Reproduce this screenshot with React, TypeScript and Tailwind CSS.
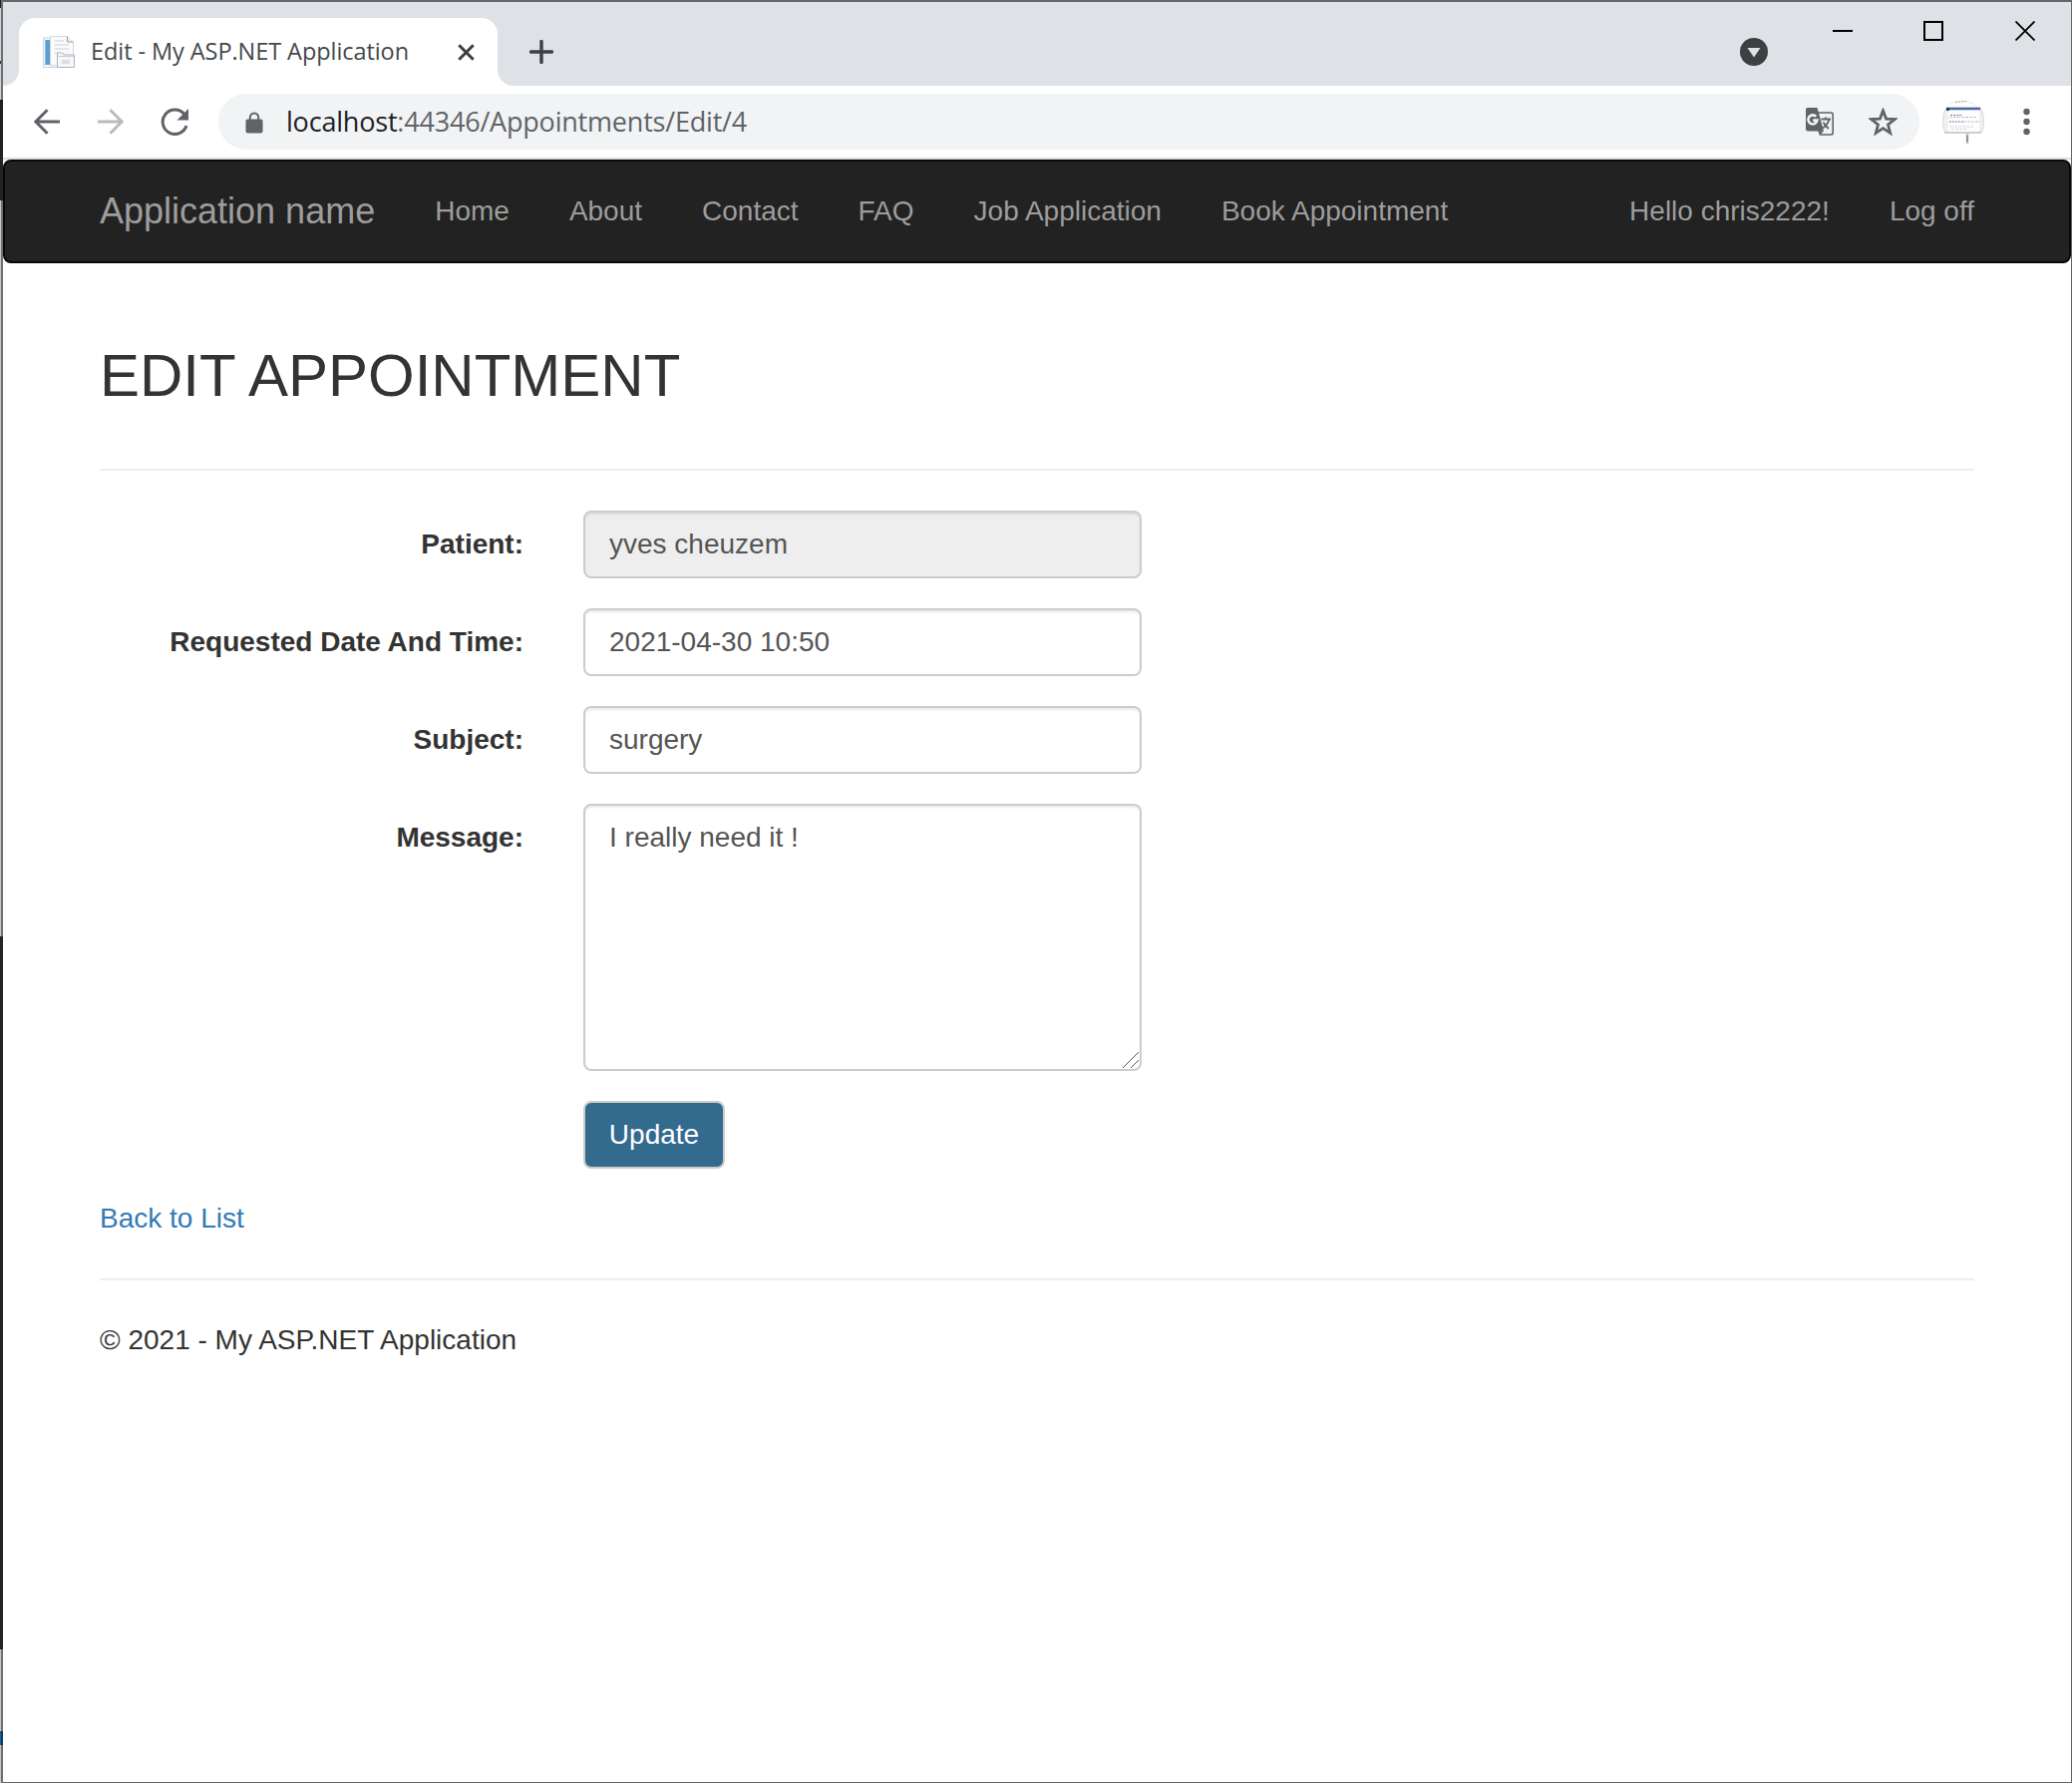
import type { ReactNode } from "react";

const navLinks = ["Home", "About", "Contact", "FAQ", "Job Application", "Book Appointment"];

function Favicon() {
  return (
    <svg className="block h-8 w-8" viewBox="0 0 32 32">
      <rect x="0.500" y="2" width="22" height="29.500" fill="#f4f8fb" stroke="#c3d6e3" />
      <rect x="2.300" y="4" width="5" height="25" fill="#5b9fd0" />
      <path d="M7.500 0.500H24.500L30.500 6.500V29.500H7.500Z" fill="#fafafb" stroke="#d5d7da" />
      <path d="M24.500 0.500V6H30.500" fill="#eee" stroke="#9c9c9c" />
      <path d="M12 5h9M12 9h14M12 13h14M12 17h4" stroke="#e2e5e9" strokeWidth="2" />
      <path d="M14.500 31.500V17H19.500L21 19H31.500V31.500Z" fill="#f6f6f8" stroke="#b5b5ba" />
      <path d="M15 20.500H31" stroke="#cfcfd3" />
      <rect x="19" y="24" width="8" height="4" fill="#dcdee6" />
    </svg>
  );
}

function TabStrip() {
  return (
    <div className="flex h-[84px] items-stretch bg-[#dee1e6]">
      <div className="flex w-4 items-end bg-white">
        <div className="h-[84px] w-4 rounded-br-[16px] bg-[#dee1e6]" />
      </div>
      <div className="mt-4 flex w-[480px] items-center rounded-t-[16px] bg-white">
        <div className="ml-6 w-[48px]">
          <Favicon />
        </div>
        <div className="mb-0.5 w-[368px] whitespace-nowrap font-['Open_Sans',sans-serif] text-[23.500px] leading-8 tracking-[-0.070px] text-[#45484c]">
          Edit - My ASP.NET Application
        </div>
        <svg className="block h-[17px] w-[17px]" viewBox="0 0 17 17">
          <path d="M1.300 1.300L15.700 15.700M15.700 1.300L1.300 15.700" stroke="#3c4043" strokeWidth="3" />
        </svg>
      </div>
      <div className="flex grow items-stretch bg-white">
        <div className="flex grow rounded-bl-[16px] bg-[#dee1e6]">
          <svg className="ml-8 mt-[38px] block h-6 w-6" viewBox="0 0 24 24">
            <path d="M12 1.500V22.500M1.500 12H22.500" stroke="#3c4043" strokeWidth="3.400" strokeLinecap="round" />
          </svg>
          <div className="grow" />
          <svg className="mt-9 block h-7 w-7" viewBox="0 0 28 28">
            <circle cx="14" cy="14" r="14" fill="#3c4043" />
            <path d="M7.500 10H20.500L14 19.500Z" fill="#dee1e6" />
          </svg>
          <svg className="ml-[65px] mt-[19px] block h-5 w-5" viewBox="0 0 20 20">
            <path d="M0 10H20" stroke="#000" strokeWidth="2" />
          </svg>
          <svg className="ml-[71px] mt-[19px] block h-5 w-5" viewBox="0 0 20 20">
            <rect x="1" y="1" width="18" height="18" fill="none" stroke="#000" strokeWidth="2" />
          </svg>
          <svg className="ml-[72px] mr-9 mt-[19px] block h-5 w-5" viewBox="0 0 20 20">
            <path d="M0.500 0.500L19.500 19.500M19.500 0.500L0.500 19.500" stroke="#000" strokeWidth="1.800" />
          </svg>
        </div>
      </div>
    </div>
  );
}

function TranslateIcon() {
  return (
    <svg className="block h-7 w-7" viewBox="0 0 28 28">
      <path d="M12 5H25.500Q27.200 5 27.200 6.700V25.300Q27.200 27 25.500 27H14.500L12 20" fill="#f1f3f4" stroke="#5f6368" strokeWidth="1.600" />
      <path d="M2 0H11.500L18 23.500H2Q0 23.500 0 21.500V2Q0 0 2 0Z" fill="#5f6368" />
      <path d="M13 23.500H18L14 27.500Z" fill="#5f6368" />
      <path d="M15.500 11.500H25M20 9.500V11.500M23.500 11.500Q22 17 17 20.500M17.500 14.500Q19.500 18.500 23 21" fill="none" stroke="#5f6368" strokeWidth="1.800" />
      <path d="M10.300 8.900A4.500 4.500 0 1 0 11.400 12.600H7.200" fill="none" stroke="#f1f3f4" strokeWidth="2.600" />
    </svg>
  );
}

function ProfilePicture() {
  return (
    <svg className="block h-11 w-11" viewBox="0 0 44 44">
      <path d="M9 4Q21 -2 34 5" fill="none" stroke="#e8e8e8" />
      <path d="M14 2.500L26 1.500" stroke="#aaa" strokeDasharray="2 1" />
      <path d="M5 8H39Q42 12 42.500 20Q43 28 40 33H4Q1 28 1.500 20Q2 13 5 8Z" fill="#f1eff2" stroke="#e0d3d7" />
      <path d="M7 9H38V32H7Z" fill="#fdfdfe" />
      <path d="M5.500 9H39" stroke="#466aa8" strokeWidth="2.600" />
      <path d="M5 9.500H8" stroke="#1d3f80" strokeWidth="3" />
      <path d="M9 15.500h12M8 22h14" stroke="#777b88" strokeDasharray="2 1" />
      <path d="M8 17.500h28M22 22h17" stroke="#c0c2ca" strokeDasharray="3 1" />
      <path d="M9 27h23M10 29.500h16" stroke="#d3d4d9" strokeDasharray="3 1" />
      <path d="M3 33H40" stroke="#c3c5d0" strokeWidth="1.500" />
      <path d="M26 34V44" stroke="#bdbdbd" strokeWidth="2.500" />
      <path d="M26 36V42" stroke="#888" strokeWidth="1.500" />
    </svg>
  );
}

function Toolbar() {
  return (
    <div className="flex h-[74px] items-center border-b-2 border-[#dadce0] bg-white">
      <svg className="ml-[31px] block h-[26px] w-[26px]" viewBox="0 0 26 26">
        <path d="M26 13H2M13.500 1.200L1.800 13L13.500 24.800" fill="none" stroke="#5f6368" strokeWidth="3" />
      </svg>
      <svg className="ml-[38px] block h-[26px] w-[26px]" viewBox="0 0 26 26">
        <path d="M0 13H24M12.500 1.200L24.200 13L12.500 24.800" fill="none" stroke="#bababa" strokeWidth="3" />
      </svg>
      <svg className="ml-[37px] block h-7 w-7" viewBox="0 0 28 28">
        <path d="M23.800 6.500A12.200 12.200 0 1 0 26 18" fill="none" stroke="#5f6368" strokeWidth="3" />
        <path d="M28 1V12.500H16.500Z" fill="#5f6368" />
      </svg>
      <div className="ml-[30px] flex h-14 w-[1706px] items-center rounded-full bg-[#f1f3f4]">
        <svg className="mt-0.5 ml-[27px] block h-[22px] w-[18px]" viewBox="0 0 18 22">
          <path d="M4.800 9V6A4.200 4.600 0 0 1 13.200 6V9" fill="none" stroke="#5f6368" strokeWidth="2" />
          <rect x="0.500" y="7.500" width="17" height="14" rx="2" fill="#5f6368" />
        </svg>
        <div className="ml-[23px] grow whitespace-nowrap font-['Open_Sans',sans-serif] text-[27px] leading-10 tracking-[-0.2px] text-[#5f6368]">
          <span className="text-[#202124]">localhost</span>:44346/Appointments/Edit/4
        </div>
        <TranslateIcon />
        <svg className="ml-[35px] mr-[22px] block h-[29px] w-[29px]" viewBox="0 0 29 29">
          <path d="M14.500 3L17.600 11.100L26.200 11.600L19.500 17L21.700 25.400L14.500 20.700L7.300 25.400L9.500 17L2.800 11.600L11.400 11.100Z" fill="none" stroke="#5f6368" strokeWidth="2.800" />
        </svg>
      </div>
      <div className="ml-[22px]">
        <ProfilePicture />
      </div>
      <svg className="ml-[38px] block h-7 w-[7px]" viewBox="0 0 7 28">
        <circle cx="3.500" cy="4" r="3.200" fill="#5f6368" />
        <circle cx="3.500" cy="14" r="3.200" fill="#5f6368" />
        <circle cx="3.500" cy="24" r="3.200" fill="#5f6368" />
      </svg>
    </div>
  );
}

function NavBar() {
  return (
    <nav className="flex h-[104px] items-center rounded-[8px] border-2 border-[#080808] bg-[#222] px-[95px] leading-10 text-[#9d9d9d]">
      <a className="mr-[60px] text-[36px]">Application name</a>
      <ul className="flex gap-[60px]">
        {navLinks.map((link) => (
          <li key={link}>{link}</li>
        ))}
      </ul>
      <ul className="ml-auto flex gap-[60px]">
        <li>Hello chris2222!</li>
        <li>Log off</li>
      </ul>
    </nav>
  );
}

function Field({ label, children }: { label: string; children: ReactNode }) {
  return (
    <div className="flex items-start gap-[60px]">
      <label className="w-[425px] pt-[14px] text-right font-bold">{label}</label>
      {children}
    </div>
  );
}

const controlClass =
  "block w-[560px] rounded-[8px] border-2 border-[#ccc] px-6 py-3 leading-10 text-[#555] shadow-[inset_0_2px_2px_rgba(0,0,0,0.075)] outline-none";

function EditForm() {
  return (
    <form className="mt-10 flex flex-col gap-[30px]">
      <Field label="Patient:">
        <input className={controlClass + " h-[68px] bg-[#eee]"} defaultValue="yves cheuzem" readOnly />
      </Field>
      <Field label="Requested Date And Time:">
        <input className={controlClass + " h-[68px] bg-white"} defaultValue="2021-04-30 10:50" />
      </Field>
      <Field label="Subject:">
        <input className={controlClass + " h-[68px] bg-white"} defaultValue="surgery" />
      </Field>
      <Field label="Message:">
        <div className="relative">
          <textarea className={controlClass + " h-[268px] resize-none bg-white"} defaultValue="I really need it !" />
          <svg className="absolute bottom-[3px] right-[3px] h-4 w-4" viewBox="0 0 16 16">
            <path d="M0 16L16 0M8 16L16 8" stroke="#555" strokeWidth="1" />
          </svg>
        </div>
      </Field>
      <div className="flex pl-[485px]">
        <button
          type="button"
          className="h-[68px] w-[142px] rounded-[8px] border-2 border-[#ccc] bg-[#336b8f] text-center leading-10 text-white"
        >
          Update
        </button>
      </div>
    </form>
  );
}

function DesktopEdge() {
  return (
    <div className="flex w-px flex-col bg-[#c8c8c8]">
      <div className="h-2 bg-[#222]" />
      <div className="h-[53px] bg-[#d0d3d8]" />
      <div className="h-[3px] bg-[#333]" />
      <div className="h-[36px] bg-[#d0d3d8]" />
      <div className="h-[101px] bg-[#222]" />
      <div className="h-[738px] bg-[#c8c8c8]" />
      <div className="h-[715px] bg-[#222527]" />
      <div className="h-[82px] bg-[#c8c8c8]" />
      <div className="h-[14px] bg-[#14668c]" />
    </div>
  );
}

export default function App() {
  return (
    <div className="flex h-[1788px] w-[2078px] overflow-hidden bg-white font-['Liberation_Sans',Arial,sans-serif] text-[28px] leading-10 text-[#333]">
      <DesktopEdge />
      <div className="flex w-[2px] flex-col bg-[#707070]">
        <div className="h-[100px]" />
        <div className="h-[101px] bg-[#222]" />
        <div className="h-[738px]" />
        <div className="h-[715px] bg-[#222527]" />
        <div className="h-[82px]" />
        <div className="h-[14px] bg-[#123b63]" />
      </div>
      <div className="flex grow flex-col border-b border-r border-t-2 border-[#666]">
        <TabStrip />
        <Toolbar />
        <NavBar />
        <main className="mx-[97px]">
          <h2 className="mt-[80px] text-[60px] leading-[66px]">EDIT APPOINTMENT</h2>
          <hr className="mt-[60px] border-t-2 border-[#eee]" />
          <EditForm />
          <div className="mt-[30px]">
            <a className="text-[#337ab7]">Back to List</a>
          </div>
          <hr className="mt-10 border-t-2 border-[#eee]" />
          <footer className="mt-10">© 2021 - My ASP.NET Application</footer>
        </main>
      </div>
    </div>
  );
}
